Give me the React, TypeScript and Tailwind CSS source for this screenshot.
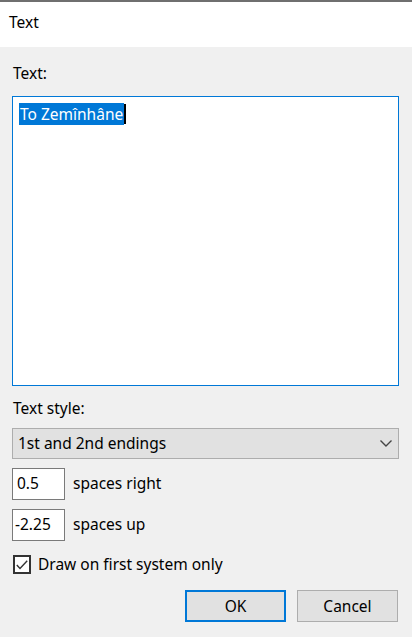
import { useState } from 'react';

export default function App() {
    const [firstOnly, setFirstOnly] = useState(true);

    return (
        <div className="w-[412px] h-[637px] flex flex-col bg-[#f0f0f0] text-[15.5px] text-black overflow-hidden"
            style={{ fontFamily: '"Noto Sans", "Open Sans", sans-serif' }}>
            {/* Title bar */}
            <div className="h-[47px] shrink-0 bg-white border-t-2 border-[#6f6f6f] flex items-center pl-[9px] pb-[3px]">
                <span>Text</span>
            </div>

            <div className="flex flex-col px-[12px] pr-[13px] pt-[16px]">
                <label className="leading-[20px] pl-[1px]">Text:</label>

                {/* Text box */}
                <div className="mt-[13px] h-[290px] bg-white border border-[#0078d7] pl-[6px] pt-[6px]">
                    <span className="inline-flex items-center h-[22px]">
                        <span className="bg-[#0078d7] text-white px-[1px] leading-[22px]">To Zemînhâne</span>
                        <span className="w-[2px] h-[20px] bg-black" />
                    </span>
                </div>

                <label className="mt-[12px] leading-[20px] pl-[1px]">Text style:</label>

                {/* Dropdown */}
                <div className="mt-[10px] h-[31px] bg-[#e1e1e1] border border-[#adadad] flex items-center justify-between pl-[5px] pr-[5px]">
                    <span>1st and 2nd endings</span>
                    <svg width="12" height="7" viewBox="0 0 12 7" className="mr-[1px]">
                        <path d="M0.5 0.5 L6 6 L11.5 0.5" fill="none" stroke="#444" strokeWidth="1.4" />
                    </svg>
                </div>

                <div className="mt-[9px] flex items-center gap-[8px]">
                    <div className="w-[53px] h-[32px] bg-white border border-[#7a7a7a] flex items-center pl-[4px]">0.5</div>
                    <span>spaces right</span>
                </div>

                <div className="mt-[9px] flex items-center gap-[8px]">
                    <div className="w-[53px] h-[32px] bg-white border border-[#7a7a7a] flex items-center pl-[2px]">-2.25</div>
                    <span>spaces up</span>
                </div>

                <label className="mt-[12px] flex items-center gap-[7px] pl-[1px] cursor-default">
                    <span
                        onClick={() => setFirstOnly(!firstOnly)}
                        className="w-[18px] h-[19px] border-2 border-[#333333] bg-white flex items-center justify-center"
                    >
                        {firstOnly && (
                            <svg width="12" height="10" viewBox="0 0 12 10">
                                <path d="M0.8 5 L4 8.4 L11.2 0.8" fill="none" stroke="#333" strokeWidth="1.4" />
                            </svg>
                        )}
                    </span>
                    <span>Draw on first system only</span>
                </label>

                <div className="mt-[14px] flex justify-end gap-[11px] pr-[1px]">
                    <button className="w-[101px] h-[32px] bg-[#e1e1e1] border-2 border-[#0078d7]">OK</button>
                    <button className="w-[101px] h-[32px] bg-[#e1e1e1] border border-[#adadad]">Cancel</button>
                </div>
            </div>
        </div>
    );
}
